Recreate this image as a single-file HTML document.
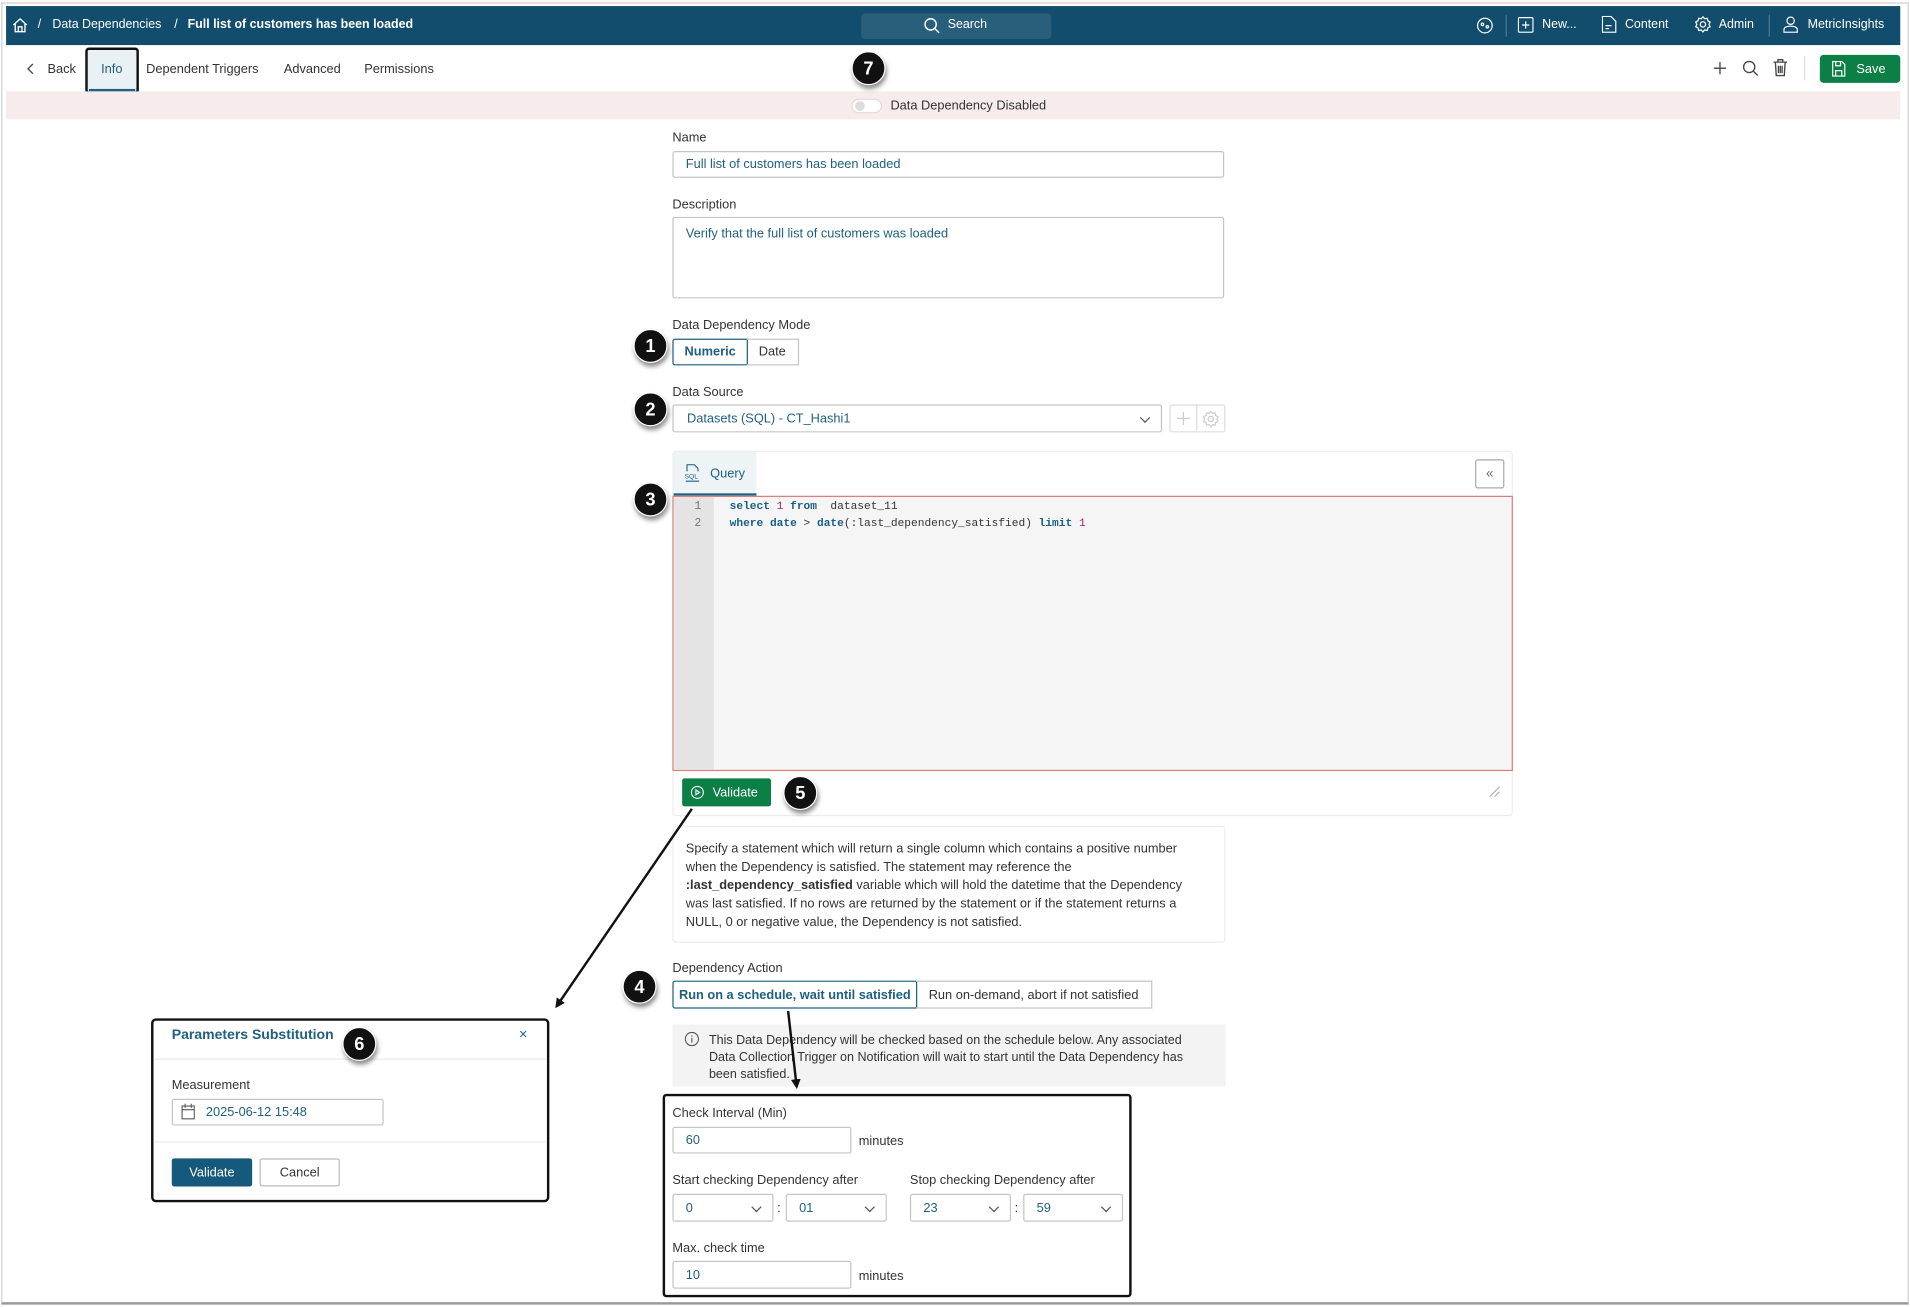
<!DOCTYPE html>
<html><head><meta charset="utf-8">
<style>
*{box-sizing:border-box;margin:0;padding:0}
html,body{width:1910px;height:1307px;overflow:hidden;background:#fff}
#w{position:absolute;left:0;top:0;width:1568px;height:1073px;transform:scale(1.21811);transform-origin:0 0;font-family:"Liberation Sans",sans-serif;font-size:10.5px;color:#333}
.a{position:absolute}
.lbl{position:absolute;font-size:10.5px;color:#333;margin-top:1px}
.inp{position:absolute;border:1px solid #c5c5c5;border-radius:2px;background:#fff;color:#1f5f80;font-size:10.5px;padding-left:10px;display:flex;align-items:center}
.c{position:absolute;width:28px;height:28px;border-radius:50%;background:#111;color:#fff;font-weight:bold;font-size:15px;display:flex;align-items:center;justify-content:center;border:1.5px solid #fff;box-shadow:1px 3px 4px rgba(0,0,0,.45)}
.sel::after{content:"";position:absolute;right:10px;top:7px;width:5px;height:5px;border-right:1.2px solid #555;border-bottom:1.2px solid #555;transform:rotate(45deg)}
.hw{color:#fff;font-size:10.2px;position:absolute;top:15px}
</style></head><body><div id="w">
<div class="a" style="left:1px;top:2px;width:1566px;height:1069px;border:1px solid #cfcfcf;border-bottom:2px solid #999"></div>
<div class="a" style="left:5px;top:5px;width:1555px;height:32px;background:#124d6d"></div>
<svg class="a" style="left:10px;top:14px" width="13" height="13" viewBox="0 0 13 13" fill="none" stroke="#fff" stroke-width="1.1"><path d="M1 6.5L6.5 1.5 12 6.5M2.5 5v7h8V5M5 12V8h3v4"/></svg>
<div class="hw" style="left:31px">/</div>
<div class="hw" style="left:43px">Data Dependencies</div>
<div class="hw" style="left:143px">/</div>
<div class="hw" style="left:154px;font-weight:bold">Full list of customers has been loaded</div>
<div class="a" style="left:707px;top:11px;width:156px;height:21px;background:#2a5f7c;border-radius:3px"></div>
<svg class="a" style="left:758px;top:14px" width="14" height="14" viewBox="0 0 14 14" fill="none" stroke="#fff" stroke-width="1.2"><circle cx="6" cy="6" r="4.6"/><path d="M9.5 9.5L13 13"/></svg>
<div class="hw" style="left:778px">Search</div>
<svg class="a" style="left:1212px;top:14px" width="14" height="14" viewBox="0 0 14 14" fill="none" stroke="#fff" stroke-width="1"><circle cx="7" cy="7" r="6"/><circle cx="5" cy="6" r="1"/><circle cx="9" cy="8" r="1"/></svg>
<div class="a" style="left:1236px;top:12px;width:1px;height:18px;background:#4d7892"></div>
<svg class="a" style="left:1246px;top:14px" width="13" height="13" viewBox="0 0 13 13" fill="none" stroke="#fff" stroke-width="1"><rect x=".5" y=".5" width="12" height="12" rx="1"/><path d="M6.5 3.5v6M3.5 6.5h6"/></svg>
<div class="hw" style="left:1266px">New...</div>
<svg class="a" style="left:1315px;top:13px" width="12" height="14" viewBox="0 0 12 14" fill="none" stroke="#fff" stroke-width="1"><path d="M.5.5h7l4 4v9H.5zM3 8h5M3 10.5h3"/></svg>
<div class="hw" style="left:1334px">Content</div>
<svg class="a" style="left:1391px;top:13px" width="14" height="14" viewBox="0 0 14 14" fill="none" stroke="#fff" stroke-width="1"><circle cx="7" cy="7" r="2.2"/><path d="M7 .8l1.4 1.6 2.1-.4.5 2.1 1.9 1-.9 1.9.9 1.9-1.9 1-.5 2.1-2.1-.4L7 13.2 5.6 11.6l-2.1.4-.5-2.1-1.9-1L2 7 1.1 5.1l1.9-1 .5-2.1 2.1.4z"/></svg>
<div class="hw" style="left:1411px">Admin</div>
<div class="a" style="left:1452px;top:12px;width:1px;height:18px;background:#4d7892"></div>
<svg class="a" style="left:1464px;top:13px" width="12" height="14" viewBox="0 0 12 14" fill="none" stroke="#fff" stroke-width="1"><circle cx="6" cy="4" r="3"/><path d="M.5 13.5v-2c0-2 2-3 5.5-3s5.5 1 5.5 3v2z"/></svg>
<div class="hw" style="left:1484px">MetricInsights</div>
<svg class="a" style="left:22px;top:52px" width="6" height="9" viewBox="0 0 6 9" fill="none" stroke="#444" stroke-width="1.1"><path d="M5 .5L1 4.5 5 8.5"/></svg>
<div class="a" style="left:39px;top:51px;font-size:10.5px">Back</div>
<div class="a" style="left:70px;top:39px;width:44px;height:38px;border:2px solid #111;border-radius:3px;background:#eaf1f5"></div>
<div class="a" style="left:73px;top:73px;width:38px;height:2px;background:#1f5f80"></div>
<div class="a" style="left:83px;top:51px;color:#1f5f80">Info</div>
<div class="a" style="left:120px;top:51px">Dependent Triggers</div>
<div class="a" style="left:233px;top:51px">Advanced</div>
<div class="a" style="left:299px;top:51px">Permissions</div>
<svg class="a" style="left:1406px;top:50px" width="12" height="12" viewBox="0 0 12 12" stroke="#444" stroke-width="1.1"><path d="M6 1v10M1 6h10"/></svg>
<svg class="a" style="left:1430px;top:49px" width="14" height="14" viewBox="0 0 14 14" fill="none" stroke="#444" stroke-width="1.1"><circle cx="6" cy="6" r="4.6"/><path d="M9.5 9.5L13 13"/></svg>
<svg class="a" style="left:1455px;top:48px" width="13" height="15" viewBox="0 0 13 15" fill="none" stroke="#444" stroke-width="1.1"><path d="M1 3h11M4.5 3V1h4v2M2.5 3l.7 11h6.6l.7-11M5 6v6M6.5 6v6M8 6v6"/></svg>
<div class="a" style="left:1481px;top:46px;width:1px;height:20px;background:#e2e2e2"></div>
<div class="a" style="left:1494px;top:45px;width:66px;height:23px;background:#0b7f45;border-radius:3px;color:#fff;font-size:10.5px;display:flex;align-items:center;padding-left:30px">Save</div>
<svg class="a" style="left:1504px;top:50px" width="11" height="13" viewBox="0 0 11 13" fill="none" stroke="#fff" stroke-width="1"><path d="M.5.5h7.5l2.5 2.5v9.5H.5zM3 .5v3.5h4V.5M3 12.5V8h5v4.5"/></svg>
<div class="a" style="left:5px;top:75px;width:1555px;height:23px;background:#f6ecec"></div>
<div class="a" style="left:699px;top:81px;width:25px;height:12px;border-radius:6px;background:#fff;border:1px solid #e5dada"></div>
<div class="a" style="left:702px;top:83px;width:8px;height:8px;border-radius:50%;background:#ddd"></div>
<div class="a" style="left:731px;top:81px">Data Dependency Disabled</div>
<div class="c" style="left:699px;top:42px">7</div>
<div class="lbl" style="left:552px;top:106px">Name</div>
<div class="inp" style="left:552px;top:124px;width:453px;height:22px">Full list of customers has been loaded</div>
<div class="lbl" style="left:552px;top:161px">Description</div>
<div class="inp" style="left:552px;top:178px;width:453px;height:67px;align-items:flex-start;padding-top:7px">Verify that the full list of customers was loaded</div>
<div class="lbl" style="left:552px;top:260px">Data Dependency Mode</div>
<div class="a" style="left:552px;top:278px;width:62px;height:22px;border:1px solid #1f5f80;border-radius:2px 0 0 2px;color:#1f5f80;font-weight:bold;display:flex;align-items:center;justify-content:center">Numeric</div>
<div class="a" style="left:613px;top:278px;width:43px;height:22px;border:1px solid #c5c5c5;border-left:none;display:flex;align-items:center;justify-content:center">Date</div>
<div class="c" style="left:520px;top:270px">1</div>
<div class="lbl" style="left:552px;top:315px">Data Source</div>
<div class="inp sel" style="left:552px;top:332px;width:402px;height:23px;padding-left:11px">Datasets (SQL) - CT_Hashi1</div>
<div class="a" style="left:960px;top:332px;width:46px;height:23px;border:1px solid #ddd;border-radius:2px"></div>
<div class="a" style="left:982px;top:332px;width:1px;height:23px;background:#ddd"></div>
<svg class="a" style="left:966px;top:338px" width="11" height="11" stroke="#ccc"><path d="M5.5 0v11M0 5.5h11"/></svg>
<svg class="a" style="left:987px;top:337px" width="14" height="14" viewBox="0 0 14 14" fill="none" stroke="#ccc" stroke-width="1"><circle cx="7" cy="7" r="2.2"/><path d="M7 .8l1.4 1.6 2.1-.4.5 2.1 1.9 1-.9 1.9.9 1.9-1.9 1-.5 2.1-2.1-.4L7 13.2 5.6 11.6l-2.1.4-.5-2.1-1.9-1L2 7 1.1 5.1l1.9-1 .5-2.1 2.1.4z"/></svg>
<div class="c" style="left:520px;top:322px">2</div>
<div class="a" style="left:552px;top:370px;width:690px;height:300px;border:1px solid #ececec;border-radius:3px"></div>
<div class="a" style="left:553px;top:371px;width:68px;height:36px;background:#eef3f6;border-bottom:2px solid #1f5f80"></div>
<svg class="a" style="left:562px;top:381px" width="13" height="15" viewBox="0 0 13 15" fill="none" stroke="#1f5f80" stroke-width=".9"><path d="M2 6V.5h6l3 3V6"/><text x="0" y="12" font-size="5.5" fill="#1f5f80" stroke="none" font-family="Liberation Sans">SQL</text><path d="M1 14h11"/></svg>
<div class="a" style="left:583px;top:383px;color:#1f5f80">Query</div>
<div class="a" style="left:1211px;top:377px;width:24px;height:24px;border:1px solid #aaa;border-radius:2px;display:flex;align-items:center;justify-content:center;color:#666;font-size:11px">«</div>
<div class="a" style="left:552px;top:407px;width:690px;height:226px;border:1px solid #de7c7c;background:#f5f5f5"></div>
<div class="a" style="left:553px;top:408px;width:33px;height:224px;background:#e4e4e4"></div>
<div class="a" style="left:570px;top:409px;font-family:'Liberation Mono',monospace;font-size:9.5px;line-height:14px;color:#777;text-align:right">1<br>2</div>
<div class="a" style="left:599px;top:409px;font-family:'Liberation Mono',monospace;font-size:9.2px;line-height:14px;color:#333;white-space:pre"><b style="color:#1a5f86">select</b> <span style="color:#a0226a">1</span> <b style="color:#1a5f86">from</b>  dataset_11
<b style="color:#1a5f86">where</b> <b style="color:#1a5f86">date</b> &gt; <b style="color:#1a5f86">date</b>(:last_dependency_satisfied) <b style="color:#1a5f86">limit</b> <span style="color:#a0226a">1</span></div>
<div class="c" style="left:520px;top:396px">3</div>
<div class="a" style="left:560px;top:639px;width:73px;height:23px;background:#0b7f45;border-radius:2px;color:#fff;display:flex;align-items:center;padding-left:25px">Validate</div>
<svg class="a" style="left:567px;top:645px" width="11" height="11" viewBox="0 0 11 11" fill="none" stroke="#fff" stroke-width=".9"><circle cx="5.5" cy="5.5" r="4.9"/><path d="M4.3 3.5v4l3-2z"/></svg>
<div class="c" style="left:643px;top:637px">5</div>
<svg class="a" style="left:1222px;top:645px" width="10" height="10" stroke="#aaa" stroke-width=".9"><path d="M1 9L9 1M5 9l4-4"/></svg>
<div class="a" style="left:552px;top:678px;width:454px;height:96px;border:1px solid #ececec;border-radius:3px;padding:11px 14px 10px 10px;font-size:10.5px;line-height:15px;color:#333">Specify a statement which will return a single column which contains a positive number when the Dependency is satisfied. The statement may reference the<br><b>:last_dependency_satisfied</b> variable which will hold the datetime that the Dependency was last satisfied. If no rows are returned by the statement or if the statement returns a NULL, 0 or negative value, the Dependency is not satisfied.</div>
<div class="lbl" style="left:552px;top:788px">Dependency Action</div>
<div class="a" style="left:552px;top:805px;width:201px;height:23px;border:1px solid #1f5f80;border-radius:2px 0 0 2px;color:#1f5f80;font-weight:bold;display:flex;align-items:center;justify-content:center">Run on a schedule, wait until satisfied</div>
<div class="a" style="left:752px;top:805px;width:194px;height:23px;border:1px solid #c5c5c5;border-left:none;display:flex;align-items:center;justify-content:center">Run on-demand, abort if not satisfied</div>
<div class="c" style="left:511px;top:796px">4</div>
<div class="a" style="left:552px;top:841px;width:454px;height:51px;background:#f3f3f3;padding:7px 20px 0 30px;line-height:14px;font-size:10.3px">This Data Dependency will be checked based on the schedule below. Any associated Data Collection Trigger on Notification will wait to start until the Data Dependency has been satisfied.</div>
<svg class="a" style="left:562px;top:847px" width="12" height="12" viewBox="0 0 12 12" fill="none" stroke="#555" stroke-width=".9"><circle cx="6" cy="6" r="5.4"/><path d="M6 5v4M6 3v1"/></svg>
<div class="a" style="left:544px;top:898px;width:385px;height:167px;border:2.5px solid #111;border-radius:3px"></div>
<div class="lbl" style="left:552px;top:907px">Check Interval (Min)</div>
<div class="inp" style="left:552px;top:925px;width:147px;height:22px">60</div>
<div class="lbl" style="left:705px;top:930px">minutes</div>
<div class="lbl" style="left:552px;top:962px">Start checking Dependency after</div>
<div class="lbl" style="left:747px;top:962px">Stop checking Dependency after</div>
<div class="inp sel" style="left:552px;top:980px;width:83px;height:23px">0</div>
<div class="lbl" style="left:638px;top:985px">:</div>
<div class="inp sel" style="left:645px;top:980px;width:83px;height:23px">01</div>
<div class="inp sel" style="left:747px;top:980px;width:83px;height:23px">23</div>
<div class="lbl" style="left:833px;top:985px">:</div>
<div class="inp sel" style="left:840px;top:980px;width:82px;height:23px">59</div>
<div class="lbl" style="left:552px;top:1018px">Max. check time</div>
<div class="inp" style="left:552px;top:1035px;width:147px;height:23px">10</div>
<div class="lbl" style="left:705px;top:1041px">minutes</div>
<div class="a" style="left:124px;top:836px;width:327px;height:151px;border:2.5px solid #111;border-radius:4px;background:#fff"></div>
<div class="a" style="left:141px;top:844px;font-size:11.5px;font-weight:bold;color:#1f5f80">Parameters Substitution</div>
<div class="a" style="left:426px;top:842px;color:#1f5f80;font-size:12px">×</div>
<div class="a" style="left:127px;top:869px;width:321px;height:1px;background:#ebebeb"></div>
<div class="lbl" style="left:141px;top:884px">Measurement</div>
<div class="inp" style="left:141px;top:902px;width:174px;height:22px;padding-left:27px">2025-06-12 15:48</div>
<svg class="a" style="left:149px;top:906px" width="11" height="13" viewBox="0 0 11 13" fill="none" stroke="#555" stroke-width=".9"><rect x=".5" y="2" width="10" height="10.5"/><path d="M.5 5h10M3 0v3.5M8 0v3.5"/></svg>
<div class="a" style="left:127px;top:937px;width:321px;height:1px;background:#ebebeb"></div>
<div class="a" style="left:141px;top:951px;width:66px;height:23px;background:#155a7d;border-radius:2px;color:#fff;display:flex;align-items:center;justify-content:center">Validate</div>
<div class="a" style="left:213px;top:951px;width:66px;height:23px;border:1px solid #bbb;border-radius:2px;display:flex;align-items:center;justify-content:center">Cancel</div>
<div class="c" style="left:281px;top:843px">6</div>
<svg class="a" style="left:0;top:0" width="1568" height="1073">
<defs><marker id="m" markerWidth="8" markerHeight="8" refX="6" refY="4" orient="auto" markerUnits="userSpaceOnUse"><path d="M0 0L8 4 0 8z" fill="#111"/></marker></defs>
<line x1="568" y1="664" x2="457" y2="826" stroke="#111" stroke-width="2" marker-end="url(#m)"/>
<line x1="647" y1="830" x2="654" y2="892" stroke="#111" stroke-width="2" marker-end="url(#m)"/>
</svg>
</div></body></html>
